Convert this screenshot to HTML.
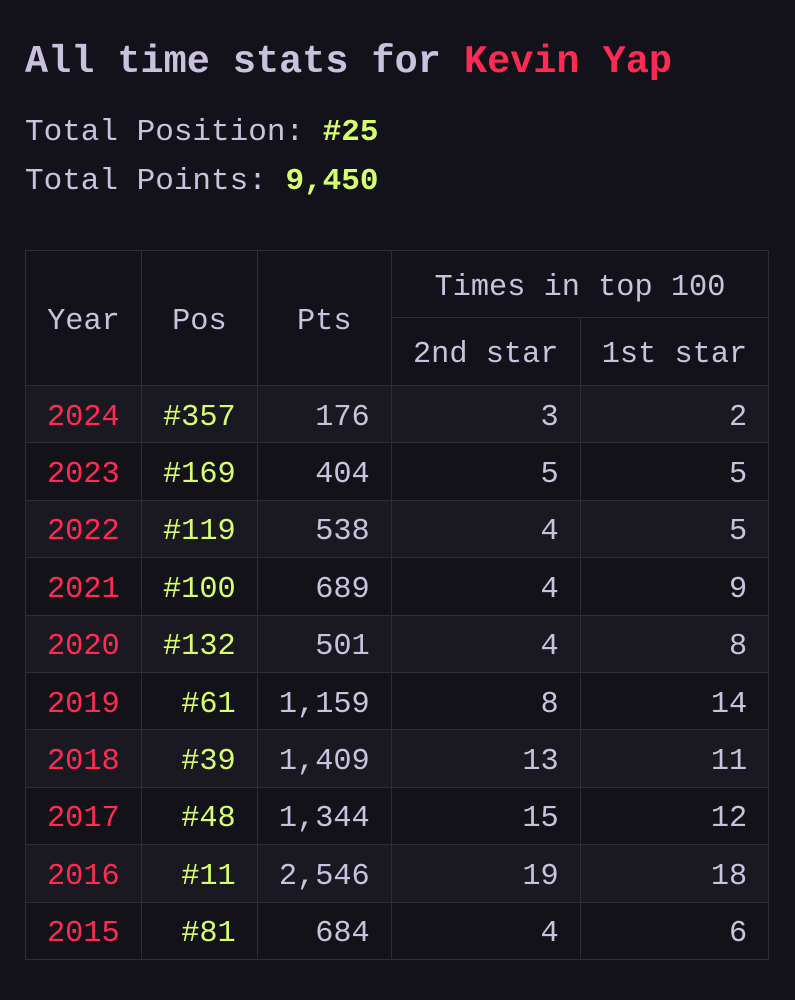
<!DOCTYPE html>
<html><head><style>
html,body{margin:0;padding:0;background:#13111a;width:795px;height:1000px;overflow:hidden}
body{font-family:"Liberation Mono","DejaVu Sans Mono",monospace;color:#c9c1de}
h1{position:absolute;left:25px;top:37px;margin:0;font-size:38.5px;font-weight:bold;line-height:50px;white-space:nowrap}
.r{color:#ff2b54}.g{color:#d6ff70}
.p{position:absolute;left:25px;font-size:31px;line-height:40px;white-space:nowrap}
table{position:absolute;left:25px;top:250px;border-collapse:collapse;table-layout:fixed;font-size:30.3px}
td,th{box-sizing:border-box;border:1px solid #2f2c38;padding:7px 21px 0 21px;font-weight:normal;white-space:nowrap}
th{text-align:center}
tr.h1 th{height:67px}tr.h2 th{height:68px}
tbody td{height:57.4px;text-align:right}
tbody td:first-child{text-align:left}
tbody tr:nth-child(odd){background:#1a1820}
tbody tr:nth-child(even){background:#141219}
</style></head><body>
<h1>All time stats for <span class="r">Kevin Yap</span></h1>
<div class="p" style="top:113px">Total Position: <b class="g">#25</b></div>
<div class="p" style="top:162px">Total Points: <b class="g">9,450</b></div>
<table>
<colgroup><col style="width:116px"><col style="width:115px"><col style="width:134px"><col style="width:189px"><col style="width:188px"></colgroup>
<thead>
<tr class="h1"><th rowspan="2">Year</th><th rowspan="2">Pos</th><th rowspan="2">Pts</th><th colspan="2">Times in top 100</th></tr>
<tr class="h2"><th>2nd star</th><th>1st star</th></tr>
</thead>
<tbody>
<tr><td class="r">2024</td><td class="g">#357</td><td>176</td><td>3</td><td>2</td></tr>
<tr><td class="r">2023</td><td class="g">#169</td><td>404</td><td>5</td><td>5</td></tr>
<tr><td class="r">2022</td><td class="g">#119</td><td>538</td><td>4</td><td>5</td></tr>
<tr><td class="r">2021</td><td class="g">#100</td><td>689</td><td>4</td><td>9</td></tr>
<tr><td class="r">2020</td><td class="g">#132</td><td>501</td><td>4</td><td>8</td></tr>
<tr><td class="r">2019</td><td class="g">#61</td><td>1,159</td><td>8</td><td>14</td></tr>
<tr><td class="r">2018</td><td class="g">#39</td><td>1,409</td><td>13</td><td>11</td></tr>
<tr><td class="r">2017</td><td class="g">#48</td><td>1,344</td><td>15</td><td>12</td></tr>
<tr><td class="r">2016</td><td class="g">#11</td><td>2,546</td><td>19</td><td>18</td></tr>
<tr><td class="r">2015</td><td class="g">#81</td><td>684</td><td>4</td><td>6</td></tr>
</tbody>
</table>
</body></html>
